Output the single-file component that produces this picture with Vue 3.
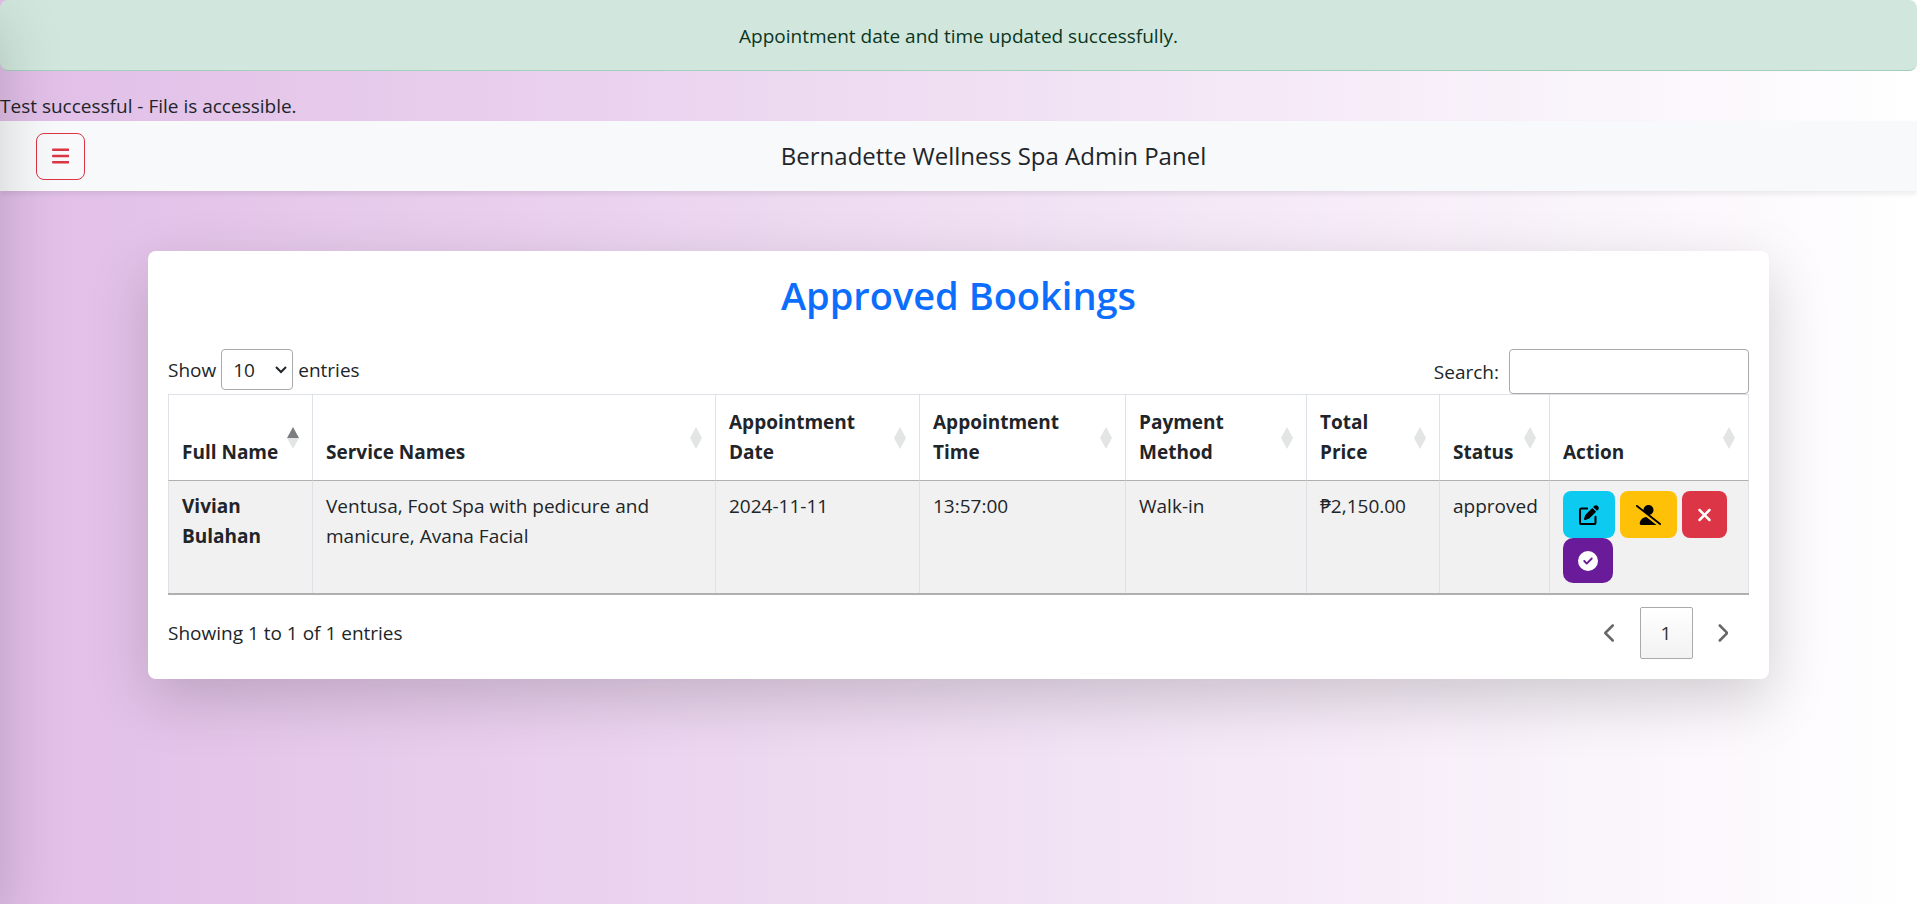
<script setup>
import { ref } from 'vue'

const pageSize = ref('10')
const search = ref('')

const columns = [
  { key: 'name', label: 'Full Name', sorted: true },
  { key: 'services', label: 'Service Names' },
  { key: 'date', label: 'Appointment Date' },
  { key: 'time', label: 'Appointment Time' },
  { key: 'payment', label: 'Payment Method' },
  { key: 'price', label: 'Total Price' },
  { key: 'status', label: 'Status' },
  { key: 'action', label: 'Action' },
]

const bookings = [
  {
    name: 'Vivian Bulahan',
    services: 'Ventusa, Foot Spa with pedicure and manicure, Avana Facial',
    date: '2024-11-11',
    time: '13:57:00',
    payment: 'Walk-in',
    price: '₱2,150.00',
    status: 'approved',
  },
]
</script>

<template>
  <div class="page">
    <aside class="sidebar" aria-hidden="true"></aside>

    <div class="alert" role="alert">Appointment date and time updated successfully.</div>
    <p class="notice">Test successful - File is accessible.</p>

    <header class="navbar">
      <button class="menu-btn" type="button" aria-label="Toggle menu">
        <svg viewBox="0 0 448 512" class="icon"><path d="M0 96C0 78.3 14.3 64 32 64H416c17.7 0 32 14.3 32 32s-14.3 32-32 32H32C14.3 128 0 113.7 0 96zM0 256c0-17.7 14.3-32 32-32H416c17.7 0 32 14.3 32 32s-14.3 32-32 32H32c-17.7 0-32-14.3-32-32zM448 416c0 17.7-14.3 32-32 32H32c-17.7 0-32-14.3-32-32s14.3-32 32-32H416c17.7 0 32 14.3 32 32z" /></svg>
      </button>
      <div class="brand">Bernadette Wellness Spa Admin Panel</div>
    </header>

    <main class="card">
      <h2 class="title">Approved Bookings</h2>

      <div class="controls">
        <label class="length">
          Show
          <span class="select">
            <select v-model="pageSize">
              <option>10</option>
              <option>25</option>
              <option>50</option>
              <option>100</option>
            </select>
            <svg class="caret" viewBox="0 0 12 8"><path d="M1 1L6 6L11 1" /></svg>
          </span>
          entries
        </label>
        <label class="filter">
          Search:
          <input v-model="search" type="search" />
        </label>
      </div>

      <table class="bookings">
        <colgroup>
          <col v-for="c in columns" :key="c.key" :class="'col-' + c.key" />
        </colgroup>
        <thead>
          <tr>
            <th v-for="c in columns" :key="c.key" scope="col" :aria-sort="c.sorted ? 'ascending' : null">
              <span class="label">{{ c.label }}</span>
              <svg class="sort" :class="{ asc: c.sorted }" viewBox="0 0 12 22">
                <path class="up" d="M6 0L12 11H0z" />
                <path class="down" d="M6 22L0 11H12z" />
              </svg>
            </th>
          </tr>
        </thead>
        <tbody>
          <tr v-for="b in bookings" :key="b.name">
            <th scope="row">{{ b.name }}</th>
            <td>{{ b.services }}</td>
            <td>{{ b.date }}</td>
            <td>{{ b.time }}</td>
            <td>{{ b.payment }}</td>
            <td>{{ b.price }}</td>
            <td>{{ b.status }}</td>
            <td>
              <div class="actions">
                <button class="btn edit" type="button" aria-label="Edit">
                  <svg viewBox="0 0 512 512" class="icon">
                    <path d="M471.6 21.7c-21.9-21.9-57.3-21.9-79.2 0L362.3 51.7l97.9 97.9 30.1-30.1c21.9-21.9 21.9-57.3 0-79.2L471.6 21.7zm-299.2 220c-6.1 6.1-10.8 13.6-13.5 21.9l-29.6 88.8c-2.9 8.6-.6 18.1 5.8 24.6s15.9 8.7 24.6 5.8l88.8-29.6c8.2-2.7 15.7-7.4 21.9-13.5L437.7 172.3 339.7 74.3 172.4 241.7z" />
                    <path class="box" d="M208 90H66Q26 90 26 130V446Q26 486 66 486H382Q422 486 422 446V304" />
                  </svg>
                </button>
                <button class="btn no-show" type="button" aria-label="Mark as no-show">
                  <svg viewBox="0 0 640 512" class="icon"><path d="M38.8 5.1C28.4-3.1 13.3-1.2 5.1 9.2S-1.2 34.7 9.2 42.9l592 464c10.4 8.2 25.5 6.3 33.7-4.1s6.3-25.5-4.1-33.7L353.3 251.6C407.9 237 448 187.2 448 128C448 57.3 390.7 0 320 0C250.2 0 193.5 55.8 192 125.2L38.8 5.1zM264.3 304.3C170.5 309.4 96 387.2 96 482.3c0 16.4 13.3 29.7 29.7 29.7H514.3c3.9 0 7.6-.7 11-2.1l-261-205.6z" /></svg>
                </button>
                <button class="btn cancel" type="button" aria-label="Cancel">
                  <svg viewBox="0 0 384 512" class="icon"><path d="M342.6 150.6c12.5-12.5 12.5-32.8 0-45.3s-32.8-12.5-45.3 0L192 210.7 86.6 105.4c-12.5-12.5-32.8-12.5-45.3 0s-12.5 32.8 0 45.3L146.7 256 41.4 361.4c-12.5 12.5-12.5 32.8 0 45.3s32.8 12.5 45.3 0L192 301.3 297.4 406.6c12.5 12.5 32.8 12.5 45.3 0s12.5-32.8 0-45.3L237.3 256 342.6 150.6z" /></svg>
                </button>
                <button class="btn complete" type="button" aria-label="Complete">
                  <svg viewBox="0 0 512 512" class="icon"><path d="M256 512A256 256 0 1 0 256 0a256 256 0 1 0 0 512zM369 209L241 337c-9.4 9.4-24.6 9.4-33.9 0l-64-64c-9.4-9.4-9.4-24.6 0-33.9s24.6-9.4 33.9 0l47 47L335 175c9.4-9.4 24.6-9.4 33.9 0s9.4 24.6 0 33.9z" /></svg>
                </button>
              </div>
            </td>
          </tr>
        </tbody>
      </table>

      <div class="footer">
        <div class="info">Showing 1 to 1 of 1 entries</div>
        <nav class="pager" aria-label="Pagination">
          <button class="page-btn" type="button" aria-label="Previous">
            <svg viewBox="0 0 320 512" class="icon"><path d="M9.4 233.4c-12.5 12.5-12.5 32.8 0 45.3l192 192c12.5 12.5 32.8 12.5 45.3 0s12.5-32.8 0-45.3L77.3 256 246.6 86.6c12.5-12.5 12.5-32.8 0-45.3s-32.8-12.5-45.3 0l-192 192z" /></svg>
          </button>
          <button class="page-btn current" type="button" aria-current="page">1</button>
          <button class="page-btn" type="button" aria-label="Next">
            <svg viewBox="0 0 320 512" class="icon"><path d="M310.6 233.4c12.5 12.5 12.5 32.8 0 45.3l-192 192c-12.5 12.5-32.8 12.5-45.3 0s-12.5-32.8 0-45.3L242.7 256 73.4 86.6c-12.5-12.5-12.5-32.8 0-45.3s32.8-12.5 45.3 0l192 192z" /></svg>
          </button>
        </nav>
      </div>
    </main>
  </div>
</template>

<style>
body {
  margin: 0;
}
</style>

<style scoped>
.page {
  min-height: 100vh;
  box-sizing: border-box;
  background: linear-gradient(to right, #e1bee7, #ffffff);
  color: #212529;
  font: 400 19px/30px "Segoe UI", "Open Sans", "Noto Sans", sans-serif;
}

.page *,
.page *::before {
  box-sizing: border-box;
}

button,
select,
input {
  font: inherit;
  color: inherit;
}

.icon {
  display: block;
  height: 20px;
  fill: currentColor;
}

/* Collapsed drawer: only its shadow reaches into the page. */
.sidebar {
  position: fixed;
  top: 0;
  bottom: 0;
  right: 100%;
  width: 250px;
  z-index: 10;
  box-shadow: 0 20px 60px rgba(0, 0, 0, 0.175);
  pointer-events: none;
}

.alert {
  padding: 21px 20px 19px;
  margin-bottom: 20px;
  text-align: center;
  color: #0a3622;
  background: #d1e7dd;
  border-bottom: 1px solid #a3cfbb;
  border-radius: 8px;
}

.notice {
  margin: 0;
}

.navbar {
  display: flex;
  align-items: center;
  min-height: 70px;
  padding: 10px 15px 10px 36px;
  background: #f8f9fb;
  box-shadow: 0 3px 5px rgba(0, 0, 0, 0.075);
}

.menu-btn {
  display: grid;
  place-items: center;
  width: 49px;
  height: 47px;
  padding: 0;
  color: #dc3545;
  background: transparent;
  border: 1px solid #dc3545;
  border-radius: 8px;
}

.brand {
  flex: 1;
  text-align: center;
  font-size: 24px;
}

.card {
  width: calc(100% - 60px);
  max-width: 1621px;
  margin: 60px auto 0;
  padding: 20px;
  background: #fff;
  border-radius: 8px;
  box-shadow: 0 20px 60px rgba(0, 0, 0, 0.175);
}

.title {
  margin: 0 0 30px;
  color: #0d6efd;
  font-size: 38px;
  font-weight: 600;
  line-height: 48px;
  text-align: center;
}

.controls {
  display: flex;
  justify-content: space-between;
  align-items: flex-start;
}

.length,
.filter {
  display: flex;
  align-items: center;
}

.length {
  gap: 5px;
}

.filter {
  gap: 10px;
}

.select {
  position: relative;
  display: flex;
}

.length select {
  width: 72px;
  height: 41px;
  padding: 0 24px 0 11px;
  appearance: none;
  background: transparent;
  border: 1px solid #aaa;
  border-radius: 4px;
}

.caret {
  position: absolute;
  top: 17px;
  right: 6px;
  width: 12px;
  height: 8px;
  fill: none;
  stroke: #212529;
  stroke-width: 2;
  pointer-events: none;
}

.filter input {
  width: 240px;
  height: 45px;
  padding: 6px;
  background: transparent;
  border: 1px solid #aaa;
  border-radius: 4px;
}

.bookings {
  width: 100%;
  table-layout: fixed;
  border-collapse: separate;
  border-spacing: 0;
  border-bottom: 2px solid #b0b0b0;
}

.col-name { width: 144px; }
.col-date { width: 204px; }
.col-time { width: 206px; }
.col-payment { width: 181px; }
.col-price { width: 133px; }
.col-status { width: 110px; }
.col-action { width: 200px; }

.bookings th,
.bookings td {
  padding: 10px 12px 10px 13px;
  border-left: 1px solid #dee2e6;
  text-align: left;
  vertical-align: top;
}

.bookings th {
  font-weight: 700;
}

.bookings tr > :last-child {
  border-right: 1px solid #dee2e6;
}

.bookings thead th {
  position: relative;
  padding-top: 12px;
  padding-bottom: 13px;
  vertical-align: bottom;
  border-top: 1px solid #dee2e6;
  border-bottom: 1px solid #b0b0b0;
}

.bookings thead .label {
  display: block;
  margin-right: 18px;
}

.bookings tbody tr {
  background: #f1f1f1;
}

.sort {
  position: absolute;
  top: 50%;
  right: 13px;
  width: 12px;
  height: 22px;
  margin-top: -11px;
  fill: #e3e4e4;
}

.sort.asc .up {
  fill: #7b7d80;
}

.actions {
  display: flex;
  flex-wrap: wrap;
  column-gap: 5px;
}

.btn {
  display: grid;
  place-items: center;
  height: 47px;
  padding: 0 16px;
  border: 0;
  border-radius: 8px;
}

.edit {
  color: #000;
  background: #0dcaf0;
}

.edit .box {
  fill: none;
  stroke: currentColor;
  stroke-width: 52;
  stroke-linecap: round;
}

.no-show {
  color: #000;
  background: #ffc107;
}

.cancel {
  padding: 0 15px;
  color: #fff;
  background: #dc3545;
}

.complete {
  height: 45px;
  padding: 0 15px;
  color: #fff;
  background: #6a1b9a;
  border-radius: 10px;
}

.footer {
  display: flex;
  justify-content: space-between;
  align-items: center;
  padding-top: 12px;
}

.pager {
  display: flex;
  gap: 2px;
}

.page-btn {
  display: grid;
  place-items: center;
  min-width: 53px;
  height: 52px;
  padding: 0 20px;
  color: #666;
  background: transparent;
  border: 1px solid transparent;
  border-radius: 2px;
}

.page-btn.current {
  color: #333;
  border-color: #aaa;
  background: linear-gradient(to bottom, #fff, #f2f2f2);
}
</style>
